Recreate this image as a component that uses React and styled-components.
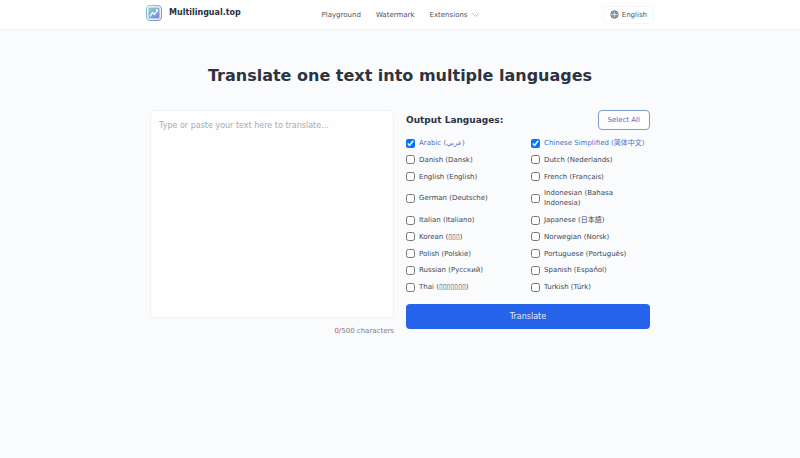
import React, { useState } from 'react'
import styled, { createGlobalStyle } from 'styled-components'

const FONT = '"DejaVu Sans", "Noto Sans CJK SC", sans-serif'
const MAX_LENGTH = 500

const LANGUAGES = [
  'Arabic (عربي)',
  'Chinese Simplified (简体中文)',
  'Danish (Dansk)',
  'Dutch (Nederlands)',
  'English (English)',
  'French (Français)',
  'German (Deutsche)',
  'Indonesian (Bahasa Indonesia)',
  'Italian (Italiano)',
  'Japanese (日本語)',
  'Korean (▯▯▯)',
  'Norwegian (Norsk)',
  'Polish (Polskie)',
  'Portuguese (Português)',
  'Russian (Русский)',
  'Spanish (Español)',
  'Thai (▯▯▯▯▯▯▯)',
  'Turkish (Türk)'
]

const GlobalStyle = createGlobalStyle`
  *, *::before, *::after {
    box-sizing: border-box;
  }
  html {
    background: #f9fbfd;
  }
  body {
    margin: 0;
    font-family: ${FONT};
    font-size: 7px;
    line-height: 10px;
    color: #374151;
  }
  button, textarea {
    font-family: inherit;
  }
  h1, h2 {
    margin: 0;
  }
`

const Header = styled.header`
  background: #fefefe;
  border-bottom: 1px solid #f1f3f5;
`

const HeaderInner = styled.div`
  display: grid;
  grid-template-columns: 1fr auto 1fr;
  align-items: center;
  max-width: 508px;
  height: 29px;
  margin: 0 auto;
`

const Brand = styled.a`
  display: flex;
  align-items: center;
  gap: 7px;
  padding-bottom: 4px;
  font-size: 8px;
  font-weight: bold;
  color: #2b323d;
  text-decoration: none;
`

const Nav = styled.nav`
  display: flex;
  gap: 15px;
`

const NavLink = styled.a`
  display: flex;
  align-items: center;
  gap: 4px;
  color: #4b5563;
  text-decoration: none;
`

const LanguageButton = styled.button`
  display: flex;
  align-items: center;
  justify-self: end;
  gap: 3px;
  height: 18px;
  padding: 0 6px;
  border: 1px solid #f5f6f8;
  border-radius: 4px;
  background: #fefefe;
  font-size: 7px;
  color: #4b5563;
`

const Main = styled.main`
  max-width: 500px;
  margin: 0 auto;
  padding-top: 36px;
`

const Title = styled.h1`
  font-size: 16px;
  line-height: 20px;
  text-align: center;
  color: #2d3340;
`

const Columns = styled.div`
  display: grid;
  grid-template-columns: 1fr 1fr;
  gap: 12px;
  margin-top: 24px;
`

const Column = styled.div`
  display: flex;
  flex-direction: column;
`

const OutputColumn = styled(Column)`
  padding-bottom: 7px;
`

const TextInput = styled.textarea`
  height: 208px;
  padding: 9px 8px;
  border: 1px solid #f1f3f6;
  border-radius: 4px;
  background: #fefefe;
  font-size: 8px;
  line-height: 11px;
  color: #374151;
  resize: none;
  &::placeholder {
    color: #a6abb3;
    opacity: 1;
  }
`

const Counter = styled.div`
  margin-top: 8px;
  text-align: right;
  color: #767d89;
`

const Count = styled.span`
  color: #dc3f4c;
`

const OutputHeader = styled.div`
  display: flex;
  align-items: center;
  justify-content: space-between;
`

const OutputTitle = styled.h2`
  font-size: 9px;
  line-height: 12px;
  color: #2b323d;
`

const SelectAllButton = styled.button`
  height: 20px;
  padding: 0 9px;
  border: 1px solid #7d9bcb;
  border-radius: 4px;
  background: #fefefe;
  font-size: 7px;
  color: #4a70c8;
`

const LanguageGrid = styled.div`
  display: grid;
  flex: 1;
  grid-template-columns: 1fr 1fr;
  column-gap: 6px;
  align-content: space-between;
  margin: 8px 0 12px;
`

const LanguageOption = styled.label`
  display: flex;
  align-items: center;
  gap: 4px;
  color: ${props => props.$checked ? '#4a70c8' : '#3f4752'};
`

const Checkbox = styled.input`
  flex: none;
  width: 9px;
  height: 9px;
  margin: 0;
`

const TranslateButton = styled.button`
  height: 25px;
  border: 0;
  border-radius: 4px;
  background: #2563eb;
  font-size: 8px;
  color: #e6edfd;
`

const Logo = () => (
  <svg width='16' height='16' viewBox='0 0 16 16' aria-hidden='true'>
    <defs>
      <linearGradient id='logo' x1='0' y1='0' x2='1' y2='1'>
        <stop offset='0' stopColor='#86d3d6' />
        <stop offset='0.5' stopColor='#7fa9d8' />
        <stop offset='1' stopColor='#8085cf' />
      </linearGradient>
    </defs>
    <rect x='0.5' y='0.5' width='15' height='15' rx='3.5' fill='#eef4fa' stroke='url(#logo)' />
    <rect x='2.5' y='2.5' width='11' height='11' rx='1.5' fill='url(#logo)' />
    <path d='M4 11.5 6.5 7.5 8.5 9.5 11.5 5' fill='none' stroke='#fff' strokeWidth='1.3' />
    <path d='M9 4.5 12.2 4 12 7.2Z' fill='#fff' />
  </svg>
)

const Chevron = () => (
  <svg width='7' height='6' viewBox='0 0 7 6' fill='none' stroke='#9ca3af' strokeWidth='0.7' aria-hidden='true'>
    <path d='M0.5 1.5 3.5 4.5 6.5 1.5' />
  </svg>
)

const Globe = () => (
  <svg width='9' height='9' viewBox='0 0 18 18' fill='none' stroke='#4b5563' strokeWidth='1.5' aria-hidden='true'>
    <circle cx='9' cy='9' r='7.5' />
    <ellipse cx='9' cy='9' rx='3.5' ry='7.5' />
    <path d='M2.5 6H15.5M2.5 12H15.5' />
  </svg>
)

export default function App () {
  const [text, setText] = useState('')
  const [selected, setSelected] = useState(LANGUAGES.slice(0, 2))

  const toggle = language => {
    setSelected(selected.includes(language)
      ? selected.filter(item => item !== language)
      : [...selected, language])
  }

  return (
    <>
      <GlobalStyle />
      <Header>
        <HeaderInner>
          <Brand href='#'><Logo />Multilingual.top</Brand>
          <Nav>
            <NavLink href='#'>Playground</NavLink>
            <NavLink href='#'>Watermark</NavLink>
            <NavLink href='#'>Extensions <Chevron /></NavLink>
          </Nav>
          <LanguageButton type='button'><Globe />English</LanguageButton>
        </HeaderInner>
      </Header>
      <Main>
        <Title>Translate one text into multiple languages</Title>
        <Columns>
          <Column>
            <TextInput
              aria-label='Text to translate'
              placeholder='Type or paste your text here to translate...'
              maxLength={MAX_LENGTH}
              value={text}
              onChange={e => setText(e.target.value)}
            />
            <Counter><Count>{text.length}</Count>/{MAX_LENGTH} characters</Counter>
          </Column>
          <OutputColumn>
            <OutputHeader>
              <OutputTitle>Output Languages:</OutputTitle>
              <SelectAllButton type='button' onClick={() => setSelected(LANGUAGES)}>Select All</SelectAllButton>
            </OutputHeader>
            <LanguageGrid>
              {LANGUAGES.map(language => (
                <LanguageOption key={language} $checked={selected.includes(language)}>
                  <Checkbox
                    type='checkbox'
                    checked={selected.includes(language)}
                    onChange={() => toggle(language)}
                  />
                  {language}
                </LanguageOption>
              ))}
            </LanguageGrid>
            <TranslateButton type='button'>Translate</TranslateButton>
          </OutputColumn>
        </Columns>
      </Main>
    </>
  )
}
